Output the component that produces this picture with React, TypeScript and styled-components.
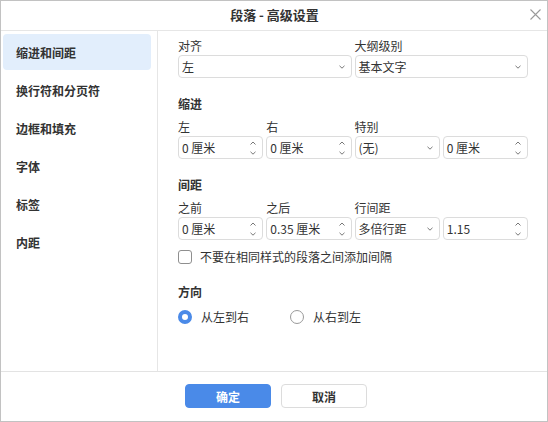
import React from "react";
import styled, { createGlobalStyle } from "styled-components";

const Global = createGlobalStyle`
  html, body { margin: 0; padding: 0; background: #fff; }
  body { font-family: "Noto Sans CJK SC", "Noto Sans", sans-serif; color: #333; }
  * { box-sizing: border-box; }
`;

const Dialog = styled.div`
  width: 548px;
  height: 422px;
  border: 1px solid #c2c2c2;
  display: flex;
  flex-direction: column;
  background: #fff;
`;

const TitleBar = styled.div`
  height: 30px;
  flex: none;
  border-bottom: 1px solid #e6e6e6;
  display: grid;
  grid-template-columns: 1fr auto 1fr;
  align-items: center;
`;

const Title = styled.div`
  grid-column: 2;
  font-size: 13px;
  font-weight: 700;
  line-height: 18px;
  color: #333;
  padding-left: 1px;
  margin-top: -1px;
`;

const Close = styled.div`
  grid-column: 3;
  justify-self: end;
  width: 11px;
  height: 11px;
  margin-right: 6px;
  margin-top: -3px;
  display: flex;
`;

const Body = styled.div`
  flex: 1;
  display: flex;
  min-height: 0;
`;

const Sidebar = styled.div`
  width: 157px;
  flex: none;
  border-right: 1px solid #e6e6e6;
  padding: 3px 6px 0 2px;
  display: flex;
  flex-direction: column;
  gap: 2px;
`;

const NavItem = styled.div<{ $active?: boolean }>`
  height: 36px;
  border-radius: 4px;
  padding-left: 13px;
  display: flex;
  align-items: center;
  font-size: 12px;
  font-weight: 700;
  color: #333;
  background: ${(p) => (p.$active ? "#e2eefc" : "transparent")};
`;

const Content = styled.div`
  flex: 1;
  padding: 6px 19px 0 20px;
  display: flex;
  flex-direction: column;
`;

const Grid = styled.div<{ $cols: number; $mt?: number }>`
  display: grid;
  grid-template-columns: repeat(${(p) => p.$cols}, 1fr);
  column-gap: 3px;
  margin-top: ${(p) => p.$mt ?? 0}px;
`;

const Label = styled.div`
  font-size: 12px;
  line-height: 17px;
  height: 18px;
  color: #333;
`;

const Heading = styled.div<{ $mt: number }>`
  font-size: 12px;
  font-weight: 700;
  line-height: 18px;
  margin-top: ${(p) => p.$mt}px;
  margin-bottom: 5px;
  color: #333;
`;

const Field = styled.div`
  height: 23px;
  border: 1px solid #dcdcdc;
  border-radius: 4px;
  display: flex;
  align-items: center;
  justify-content: space-between;
  padding: 0 6px 0 3px;
  font-size: 12px;
  color: #333;
  background: #fff;
`;

const Value = styled.span`
  white-space: nowrap;
  line-height: 16px;
`;

const Spin = styled.div`
  display: flex;
  flex-direction: column;
  gap: 6px;
`;

const CheckRow = styled.label`
  display: flex;
  align-items: center;
  gap: 8px;
  height: 17px;
  margin-top: 8px;
  font-size: 12px;
  color: #333;
`;

const Box = styled.span`
  width: 14px;
  height: 14px;
  border: 1px solid #8f8f8f;
  border-radius: 3px;
  flex: none;
`;

const RadioGroup = styled.div`
  display: flex;
  height: 17px;
  align-items: center;
  margin-top: 2px;
`;

const RadioItem = styled.label`
  display: flex;
  align-items: center;
  gap: 9px;
  width: 112px;
  font-size: 12px;
  color: #333;
`;

const RadioDot = styled.span<{ $on?: boolean }>`
  width: 14px;
  height: 14px;
  border-radius: 50%;
  flex: none;
  border: ${(p) => (p.$on ? "4px solid #4a8ae8" : "1px solid #9a9a9a")};
  background: #fff;
`;

const Footer = styled.div`
  height: 50px;
  flex: none;
  border-top: 1px solid #e3e3e3;
  display: flex;
  justify-content: center;
  align-items: center;
  gap: 10px;
  padding-left: 4px;
  padding-bottom: 1px;
`;

const Button = styled.button<{ $primary?: boolean }>`
  width: 86px;
  height: 24px;
  border-radius: 4px;
  font-family: inherit;
  font-size: 12px;
  font-weight: 700;
  padding: 0;
  border: 1px solid ${(p) => (p.$primary ? "#4a8ae8" : "#dcdcdc")};
  background: ${(p) => (p.$primary ? "#4a8ae8" : "#fff")};
  color: ${(p) => (p.$primary ? "#fff" : "#333")};
`;

const Chevron = ({ up }: { up?: boolean }) => (
  <svg width="6" height="4" viewBox="0 0 6 4">
    <polyline
      points={up ? "0.5,3.5 3,1 5.5,3.5" : "0.5,0.8 3,3.2 5.5,0.8"}
      fill="none"
      stroke="#777"
      strokeWidth="1"
    />
  </svg>
);

const Select = ({ value }: { value: string }) => (
  <Field>
    <Value>{value}</Value>
    <Chevron />
  </Field>
);

const Spinner = ({ value }: { value: string }) => (
  <Field>
    <Value>{value}</Value>
    <Spin>
      <Chevron up />
      <Chevron />
    </Spin>
  </Field>
);

const nav = ["缩进和间距", "换行符和分页符", "边框和填充", "字体", "标签", "内距"];

export default function App() {
  return (
    <>
      <Global />
      <Dialog>
        <TitleBar>
          <Title>段落 - 高级设置</Title>
          <Close>
            <svg width="11" height="11" viewBox="0 0 11 11">
              <path d="M0.5 0.5 L10.5 10.5 M10.5 0.5 L0.5 10.5" stroke="#9a9a9a" strokeWidth="1.1" />
            </svg>
          </Close>
        </TitleBar>
        <Body>
          <Sidebar>
            {nav.map((n, i) => (
              <NavItem key={n} $active={i === 0}>
                {n}
              </NavItem>
            ))}
          </Sidebar>
          <Content>
            <Grid $cols={2}>
              <Label>对齐</Label>
              <Label>大纲级别</Label>
              <Select value="左" />
              <Select value="基本文字" />
            </Grid>

            <Heading $mt={17}>缩进</Heading>
            <Grid $cols={4}>
              <Label>左</Label>
              <Label>右</Label>
              <Label>特别</Label>
              <Label />
              <Spinner value="0 厘米" />
              <Spinner value="0 厘米" />
              <Select value="(无)" />
              <Spinner value="0 厘米" />
            </Grid>

            <Heading $mt={17}>间距</Heading>
            <Grid $cols={4}>
              <Label>之前</Label>
              <Label>之后</Label>
              <Label>行间距</Label>
              <Label />
              <Spinner value="0 厘米" />
              <Spinner value="0.35 厘米" />
              <Select value="多倍行距" />
              <Spinner value="1.15" />
            </Grid>

            <CheckRow>
              <Box />
              不要在相同样式的段落之间添加间隔
            </CheckRow>

            <Heading $mt={18}>方向</Heading>
            <RadioGroup>
              <RadioItem>
                <RadioDot $on />
                从左到右
              </RadioItem>
              <RadioItem>
                <RadioDot />
                从右到左
              </RadioItem>
            </RadioGroup>
          </Content>
        </Body>
        <Footer>
          <Button $primary>确定</Button>
          <Button>取消</Button>
        </Footer>
      </Dialog>
    </>
  );
}
